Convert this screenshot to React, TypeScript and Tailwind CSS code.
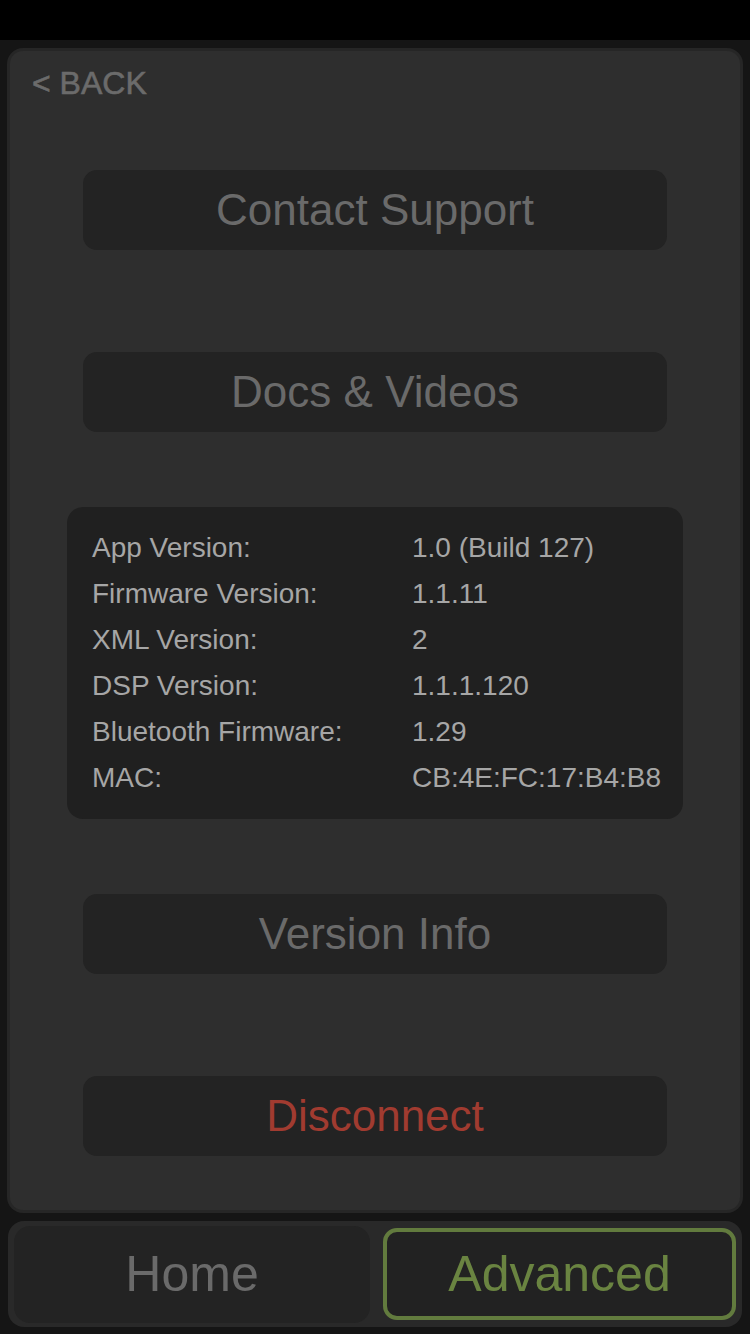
import React from 'react';

const rows: [string, string][] = [
  ['App Version:', '1.0 (Build 127)'],
  ['Firmware Version:', '1.1.11'],
  ['XML Version:', '2'],
  ['DSP Version:', '1.1.1.120'],
  ['Bluetooth Firmware:', '1.29'],
  ['MAC:', 'CB:4E:FC:17:B4:B8'],
];

const font = { fontFamily: '"Liberation Sans", Arial, sans-serif' };

const PanelButton: React.FC<{ label: string; red?: boolean; className?: string }> = ({ label, red, className }) => (
  <div
    className={`w-[584px] h-[80px] self-center rounded-[14px] bg-[#232323] flex items-center justify-center text-[44px] leading-none ${
      red ? 'text-[#a13b30]' : 'text-[#6a6a6a]'
    } ${className ?? ''}`}
  >
    {label}
  </div>
);

const App: React.FC = () => {
  return (
    <div className="w-[750px] h-[1334px] bg-[#151515] flex flex-col overflow-hidden" style={font}>
      <div className="h-10 bg-black shrink-0" />

      {/* main panel */}
      <div className="mx-[7px] mt-2 h-[1165px] rounded-[16px] bg-[#262626] p-[3px] shrink-0">
        <div className="h-full rounded-[13px] bg-[#2e2e2e] flex flex-col">
          <div className="pl-[22px] pt-[16px] h-[48px] text-[32px] leading-[32px] font-medium text-[#6b6b6b] [-webkit-text-stroke:0.6px_#6b6b6b]">
            &lt; BACK
          </div>

          <PanelButton label="Contact Support" className="mt-[71px]" />
          <PanelButton label="Docs & Videos" className="mt-[102px]" />

          <div className="mt-[75px] w-[616px] self-center rounded-[16px] bg-[#202020] py-[18px] pl-[25px]">
            {rows.map(([k, v]) => (
              <div key={k} className="h-[46px] flex items-center text-[28px] text-[#a6a6a6]">
                <span className="w-[320px] shrink-0">{k}</span>
                <span>{v}</span>
              </div>
            ))}
          </div>

          <PanelButton label="Version Info" className="mt-[75px]" />
          <PanelButton label="Disconnect" red className="mt-[102px]" />
        </div>
      </div>

      {/* tab bar */}
      <div className="mx-[8px] mt-2 h-[106px] rounded-[16px] bg-[#292929] flex items-center gap-[13px] px-[6px] shrink-0">
        <div className="w-[356px] h-[97px] rounded-[16px] bg-[#232323] flex items-center justify-center text-[50px] text-[#6a6a6a] leading-none">
          Home
        </div>
        <div className="w-[353px] h-[92px] rounded-[14px] bg-[#222222] border-4 border-[#627b3e] flex items-center justify-center text-[50px] text-[#6a8441] leading-none">
          Advanced
        </div>
      </div>
    </div>
  );
};

export default App;
